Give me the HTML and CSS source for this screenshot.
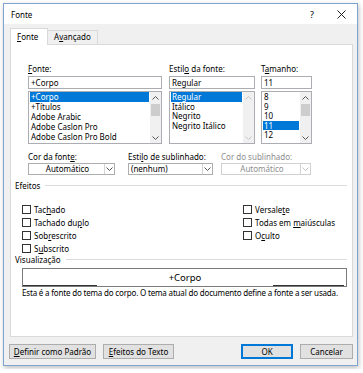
FILE: index.html
```html
<!DOCTYPE html>
<html lang="pt">
<head>
    <meta charset="UTF-8">
    <title>Fonte</title>
    <link rel="stylesheet" href="styles.css">
</head>
<body>
<div class="window">
    <div class="titlebar">
        <span class="title">Fonte</span>
        <span class="help">?</span>
        <span class="close">
            <svg width="9" height="9" viewBox="0 0 9 9"><path d="M0.5 0.5 L8.5 8.5 M8.5 0.5 L0.5 8.5" stroke="#222" stroke-width="1"/></svg>
        </span>
    </div>
    <div class="content">
        <div class="tabs">
            <div class="tab active"><u>F</u>onte</div>
            <div class="tab">A<u>v</u>ançado</div>
        </div>
        <div class="panel">
            <div class="lists">
                <div class="col col-font">
                    <div class="label"><u>F</u>onte:</div>
                    <div class="input">+Corpo</div>
                    <div class="listbox">
                        <ul class="items">
                            <li class="sel">+Corpo</li>
                            <li>+Títulos</li>
                            <li>Adobe Arabic</li>
                            <li>Adobe Caslon Pro</li>
                            <li>Adobe Caslon Pro Bold</li>
                        </ul>
                        <div class="scroll">
                            <div class="arrow"><svg width="7" height="4" viewBox="0 0 7 4"><path d="M0.5 3.5 L3.5 0.5 L6.5 3.5" fill="none" stroke="#555"/></svg></div>
                            <div class="thumb"></div>
                            <div class="spacer"></div>
                            <div class="arrow"><svg width="7" height="4" viewBox="0 0 7 4"><path d="M0.5 0.5 L3.5 3.5 L6.5 0.5" fill="none" stroke="#555"/></svg></div>
                        </div>
                    </div>
                </div>
                <div class="col col-style">
                    <div class="label">Estil<u>o</u> da fonte:</div>
                    <div class="input">Regular</div>
                    <div class="listbox">
                        <ul class="items tight">
                            <li class="sel">Regular</li>
                            <li>Itálico</li>
                            <li>Negrito</li>
                            <li>Negrito Itálico</li>
                        </ul>
                        <div class="scroll disabled">
                            <div class="arrow"><svg width="7" height="4" viewBox="0 0 7 4"><path d="M0.5 3.5 L3.5 0.5 L6.5 3.5" fill="none" stroke="#c4c4c4"/></svg></div>
                            <div class="spacer"></div>
                            <div class="arrow"><svg width="7" height="4" viewBox="0 0 7 4"><path d="M0.5 0.5 L3.5 3.5 L6.5 0.5" fill="none" stroke="#c4c4c4"/></svg></div>
                        </div>
                    </div>
                </div>
                <div class="col col-size">
                    <div class="label">T<u>a</u>manho:</div>
                    <div class="input">11</div>
                    <div class="listbox">
                        <ul class="items tight">
                            <li>8</li>
                            <li>9</li>
                            <li>10</li>
                            <li class="sel">11</li>
                            <li>12</li>
                        </ul>
                        <div class="scroll">
                            <div class="arrow"><svg width="7" height="4" viewBox="0 0 7 4"><path d="M0.5 3.5 L3.5 0.5 L6.5 3.5" fill="none" stroke="#555"/></svg></div>
                            <div class="thumb"></div>
                            <div class="spacer"></div>
                            <div class="arrow"><svg width="7" height="4" viewBox="0 0 7 4"><path d="M0.5 0.5 L3.5 3.5 L6.5 0.5" fill="none" stroke="#555"/></svg></div>
                        </div>
                    </div>
                </div>
            </div>

            <div class="combos">
                <div class="col col-color">
                    <div class="label">Cor da font<u>e</u>:</div>
                    <div class="combo">
                        <span class="value center">Automático</span>
                        <span class="drop"><svg width="7" height="4" viewBox="0 0 7 4"><path d="M0.5 0.5 L3.5 3.5 L6.5 0.5" fill="none" stroke="#555"/></svg></span>
                    </div>
                </div>
                <div class="col col-under">
                    <div class="label">Esti<u>l</u>o de sublinhado:</div>
                    <div class="combo">
                        <span class="value">(nenhum)</span>
                        <span class="drop"><svg width="7" height="4" viewBox="0 0 7 4"><path d="M0.5 0.5 L3.5 3.5 L6.5 0.5" fill="none" stroke="#555"/></svg></span>
                    </div>
                </div>
                <div class="col col-ucolor disabled">
                    <div class="label">Cor do sublinhado:</div>
                    <div class="combo">
                        <span class="value center">Automático</span>
                        <span class="drop"><svg width="7" height="4" viewBox="0 0 7 4"><path d="M0.5 0.5 L3.5 3.5 L6.5 0.5" fill="none" stroke="#c4c4c4"/></svg></span>
                    </div>
                </div>
            </div>

            <div class="group-title"><span>Efeitos</span></div>
            <div class="effects">
                <label class="check"><span class="box"></span><span>Tac<u>h</u>ado</span></label>
                <label class="check"><span class="box"></span><span>Tachado du<u>p</u>lo</span></label>
                <label class="check"><span class="box"></span><span>Sob<u>r</u>escrito</span></label>
                <label class="check"><span class="box"></span><span>S<u>u</u>bscrito</span></label>
                <label class="check"><span class="box"></span><span>Versale<u>t</u>e</span></label>
                <label class="check"><span class="box"></span><span>Todas em <u>m</u>aiúsculas</span></label>
                <label class="check"><span class="box"></span><span>O<u>c</u>ulto</span></label>
            </div>

            <div class="group-title preview-title"><span>Visualização</span></div>
            <div class="preview">
                <span class="line left"></span>
                <span class="sample">+Corpo</span>
                <span class="line right"></span>
            </div>
            <div class="desc">Esta é a fonte do tema do corpo. O tema atual do documento define a fonte a ser usada.</div>
        </div>

        <div class="buttons">
            <button class="btn btn-default"><u>D</u>efinir como Padrão</button>
            <button class="btn btn-effects"><u>E</u>feitos do Texto</button>
            <span class="fill"></span>
            <button class="btn btn-ok">OK</button>
            <button class="btn btn-cancel">Cancelar</button>
        </div>
    </div>
</div>
</body>
</html>
```

FILE: styles.css
```css
* {
    box-sizing: border-box;
}
body {
    margin: 0;
    padding: 3px;
    background: #fff;
    font-family: "Noto Sans", "Open Sans", sans-serif;
    font-size: 8px;
    color: #000;
}
u {
    text-decoration: underline;
    text-underline-offset: 1px;
}

.window {
    width: 355px;
    height: 363px;
    border: 1px solid #7ea4cf;
    background: #f0f0f0;
    box-shadow: 1px 2px 5px rgba(0, 0, 0, 0.25);
    display: flex;
    flex-direction: column;
}
.titlebar {
    height: 20px;
    background: #fff;
    display: flex;
    align-items: center;
    padding-left: 7px;
    flex-shrink: 0;
}
.titlebar .title {
    flex: 1;
}
.titlebar .help {
    width: 28px;
    text-align: center;
    font-size: 9px;
}
.titlebar .close {
    width: 31px;
    display: flex;
    justify-content: center;
}

.content {
    padding: 4px 4px 0 6px;
}
.tabs {
    display: flex;
    align-items: flex-end;
    height: 16px;
}
.tab {
    height: 14px;
    line-height: 12px;
    padding: 0 6px;
    border: 1px solid #d9d9d9;
    border-bottom: none;
    background: #f0f0f0;
}
.tab + .tab {
    border-left: none;
}
.tab.active {
    width: 38px;
    height: 17px;
    line-height: 15px;
    background: #fff;
    margin-bottom: -1px;
    position: relative;
    z-index: 1;
}

.panel {
    height: 293px;
    background: #fff;
    border: 1px solid #d9d9d9;
    padding: 19px 5px 0 4px;
}

.label {
    height: 10px;
    line-height: 10px;
    white-space: nowrap;
}
.lists {
    display: flex;
    margin-left: 13px;
}
.col-font { width: 134px; margin-right: 7px; }
.col-style { width: 86px; margin-right: 6px; }
.col-size { width: 51px; }

.input {
    height: 13px;
    line-height: 11px;
    margin-top: 2px;
    border: 1px solid #abadb3;
    padding-left: 2px;
}
.listbox {
    height: 53px;
    margin-top: 2px;
    border: 1px solid #abadb3;
    display: flex;
}
.items {
    list-style: none;
    margin: 0;
    padding: 0 1px;
    flex: 1;
}
.items li {
    height: 10px;
    line-height: 10px;
    padding-left: 1px;
    white-space: nowrap;
}
.items.tight li {
    height: 9.6px;
    line-height: 9.6px;
}
.items li.sel {
    background: #0078d7;
    color: #fff;
}
.scroll {
    width: 11px;
    background: #f0f0f0;
    display: flex;
    flex-direction: column;
}
.scroll .arrow {
    height: 11px;
    display: flex;
    align-items: center;
    justify-content: center;
}
.scroll .thumb {
    height: 12px;
    margin: 1px 1px 0;
    background: #cdcdcd;
}
.scroll .spacer {
    flex: 1;
}

.combos {
    display: flex;
    margin: 8px 0 0 13px;
}
.col-color { width: 87px; margin-right: 13px; }
.col-under { width: 85px; margin-right: 8px; }
.col-ucolor { width: 90px; }
.combo {
    height: 12px;
    margin-top: 1px;
    border: 1px solid #adadad;
    display: flex;
    line-height: 10px;
}
.combo .value {
    flex: 1;
    padding-left: 2px;
}
.combo .value.center {
    text-align: center;
}
.combo .drop {
    width: 10px;
    border-left: 1px solid #d4d4d4;
    display: flex;
    align-items: center;
    justify-content: center;
}
.disabled .label,
.disabled .value {
    color: #8d8d8d;
}
.disabled .combo {
    border-color: #d0d0d0;
}

.group-title {
    display: flex;
    align-items: center;
    height: 9px;
    line-height: 9px;
    margin-top: 6px;
}
.group-title::after {
    content: "";
    flex: 1;
    height: 1px;
    background: #dcdcdc;
    margin-left: 5px;
}

.effects {
    display: grid;
    grid-template-columns: 221px 1fr;
    grid-template-rows: repeat(4, 13px);
    grid-auto-flow: column;
    margin: 12.5px 0 0 7px;
}
.check {
    display: flex;
    align-items: center;
    white-space: nowrap;
    line-height: 9px;
}
.check .box {
    width: 9px;
    height: 9px;
    border: 1px solid #333;
    background: #fff;
    margin-right: 3px;
}

.preview-title {
    margin-top: 0.5px;
}
.preview {
    width: 325px;
    height: 19px;
    margin: 4px 0 0 7px;
    border: 1px solid #7a7a7a;
    display: flex;
    align-items: center;
    padding-right: 2px;
}
.preview .line {
    align-self: flex-end;
    height: 1px;
    background: #333;
}
.preview .line.left { width: 74px; }
.preview .line.right { width: 71px; }
.preview .sample {
    flex: 1;
    text-align: center;
    font-size: 9.5px;
}
.desc {
    margin: 1px 0 0 7px;
    height: 10px;
    line-height: 10px;
    white-space: nowrap;
    letter-spacing: -0.18px;
}

.buttons {
    display: flex;
    margin: 7px 0 0 -1px;
}
.btn {
    height: 15px;
    padding: 0;
    font-family: inherit;
    font-size: 8px;
    color: #000;
    background: #e1e1e1;
    border: 1px solid #adadad;
    line-height: 12px;
}
.btn-default { width: 87px; margin-right: 7px; }
.btn-effects { width: 71px; }
.fill { flex: 1; }
.btn-ok {
    width: 52px;
    margin-right: 7px;
    border: 1px solid #0078d7;
    box-shadow: inset 0 0 0 1px #0078d7;
}
.btn-cancel { width: 53px; }
```
